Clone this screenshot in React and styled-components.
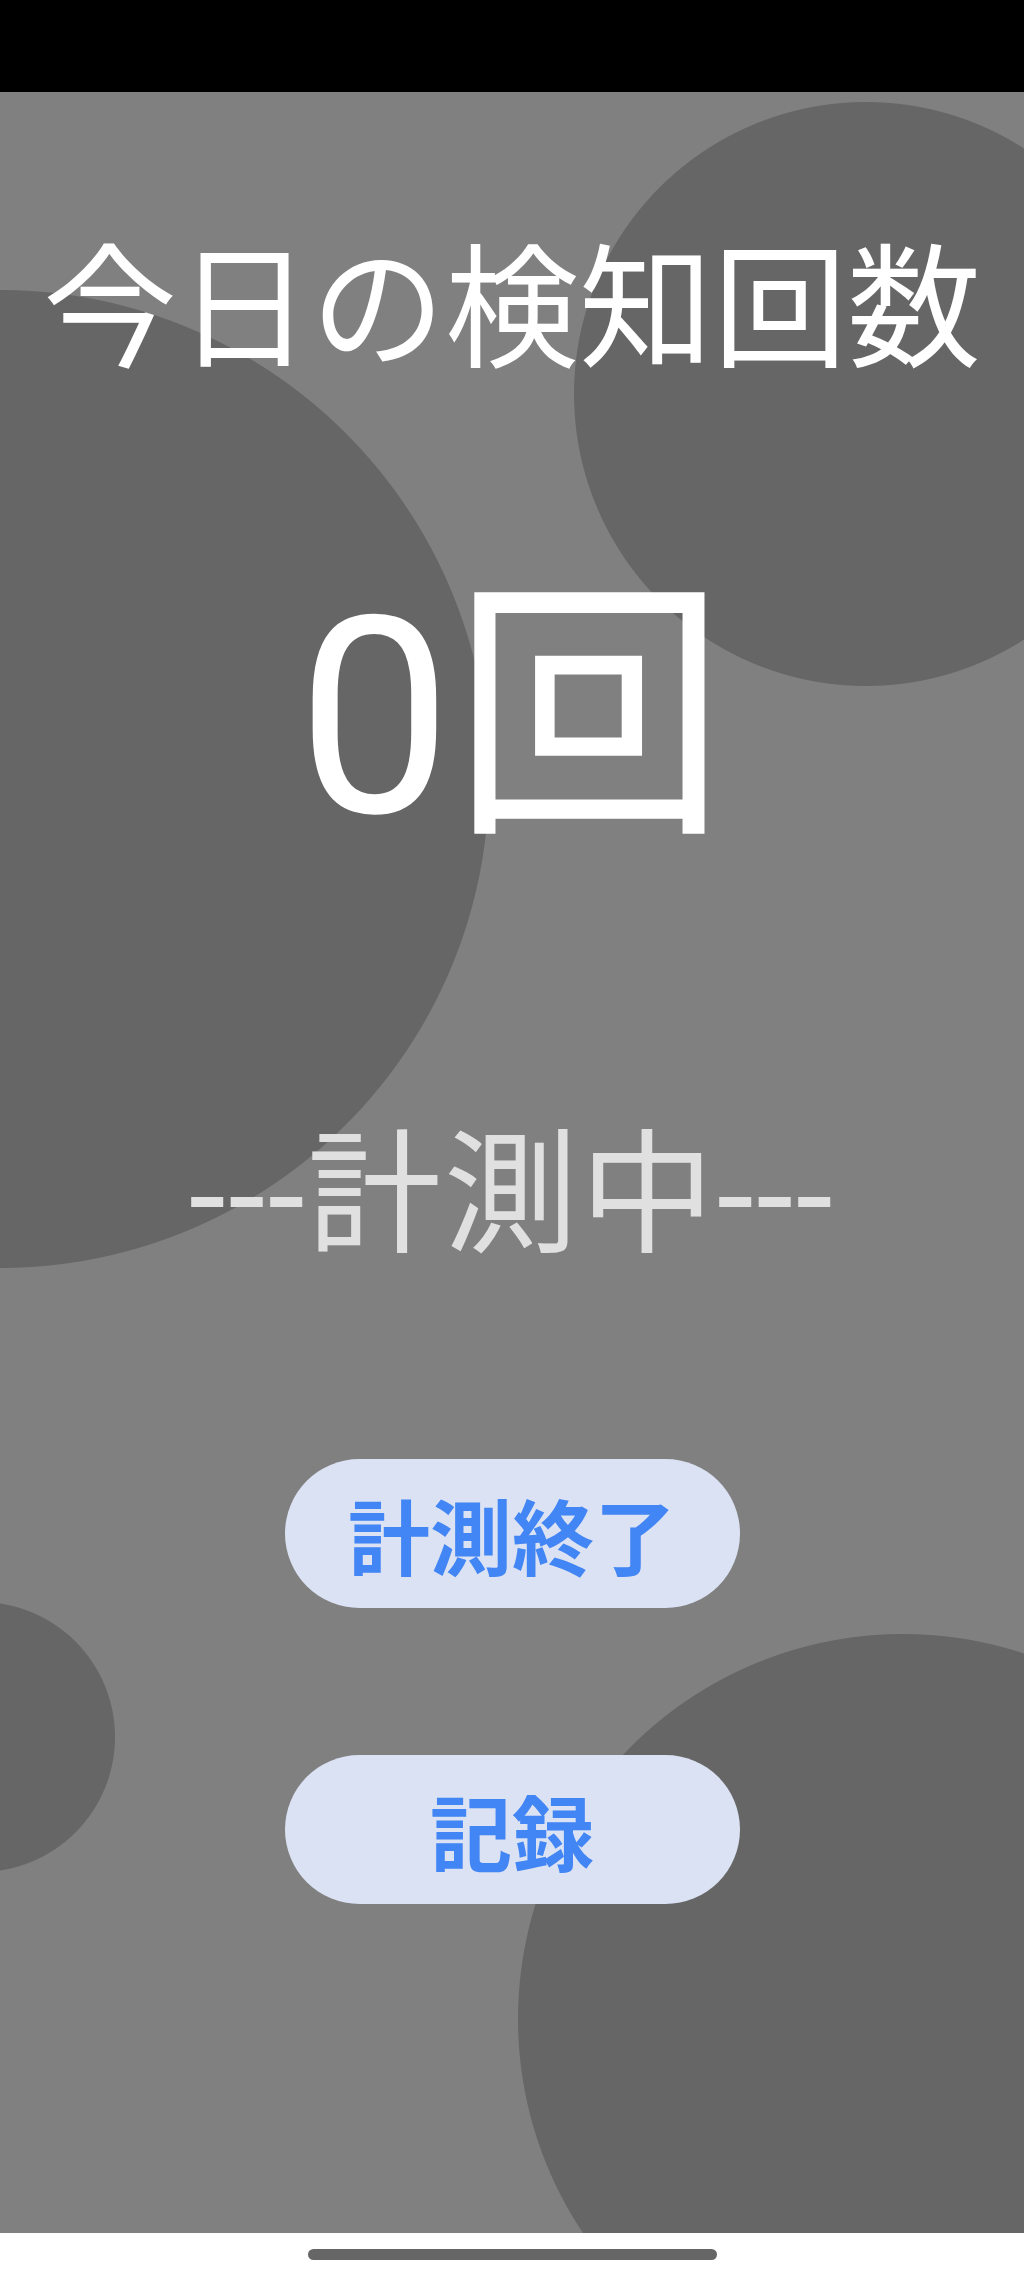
import React from "react";
import styled, { createGlobalStyle } from "styled-components";

const GlobalStyle = createGlobalStyle`
  html, body {
    margin: 0;
    padding: 0;
    background: #ffffff;
  }
  body {
    font-family: Roboto, "Noto Sans CJK JP", sans-serif;
  }
`;

// decorative blobs behind the counter: [x, y, radius] inside the content area
const blobs = [
  [866, 302, 292],
  [0, 687, 489],
  [-20, 1645, 135],
  [903, 1927, 385],
];

const blobBackground = blobs
  .map(
    ([x, y, r]) =>
      `radial-gradient(circle ${r}px at ${x}px ${y}px, #666666 ${r - 0.5}px, transparent ${r + 0.5}px)`
  )
  .join(", ");

export default function App() {
  return (
    <>
      <GlobalStyle />
      <Screen>
        <StatusBar />
        <Content>
          <Title>今日の検知回数</Title>
          <Count>0回</Count>
          <Status>---計測中---</Status>
          <Actions>
            <PillButton>計測終了</PillButton>
            <PillButton>記録</PillButton>
          </Actions>
        </Content>
        <NavBar>
          <Handle />
        </NavBar>
      </Screen>
    </>
  );
}

const Screen = styled.div`
  width: 1024px;
  min-height: 2276px;
  display: flex;
  flex-direction: column;
  font-family: Roboto, "Noto Sans CJK JP", sans-serif;
`;

const StatusBar = styled.div`
  height: 92px;
  background: #000000;
`;

const Content = styled.main`
  flex: 1;
  display: flex;
  flex-direction: column;
  align-items: center;
  background-color: #808080;
  background-image: ${blobBackground};
  background-repeat: no-repeat;
`;

const Title = styled.h1`
  margin: 153px 0 0;
  font-size: 134px;
  font-weight: 400;
  line-height: 1;
  color: #ffffff;
  white-space: nowrap;
`;

const Count = styled.div`
  margin-top: 202px;
  font-size: 275px;
  line-height: 1;
  color: #ffffff;
  white-space: nowrap;
`;

const Status = styled.div`
  margin-top: 274px;
  font-size: 134px;
  letter-spacing: 2.5px;
  line-height: 1;
  color: #e0e0e0;
  white-space: nowrap;
`;

const Actions = styled.div`
  margin-top: 195px;
  display: flex;
  flex-direction: column;
  align-items: center;
  gap: 147px;
`;

const PillButton = styled.button`
  width: 455px;
  height: 149px;
  padding: 14px 0 0;
  display: flex;
  align-items: center;
  justify-content: center;
  border: none;
  border-radius: 75px;
  background: #dae2f3;
  color: #4285f4;
  font-family: Roboto, "Noto Sans CJK JP", sans-serif;
  font-size: 82px;
  font-weight: 700;
  line-height: 1;
  cursor: pointer;
`;

const NavBar = styled.div`
  height: 43px;
  background: #ffffff;
  display: flex;
  justify-content: center;
`;

const Handle = styled.div`
  margin-top: 16px;
  width: 409px;
  height: 11px;
  border-radius: 6px;
  background: #666666;
`;
